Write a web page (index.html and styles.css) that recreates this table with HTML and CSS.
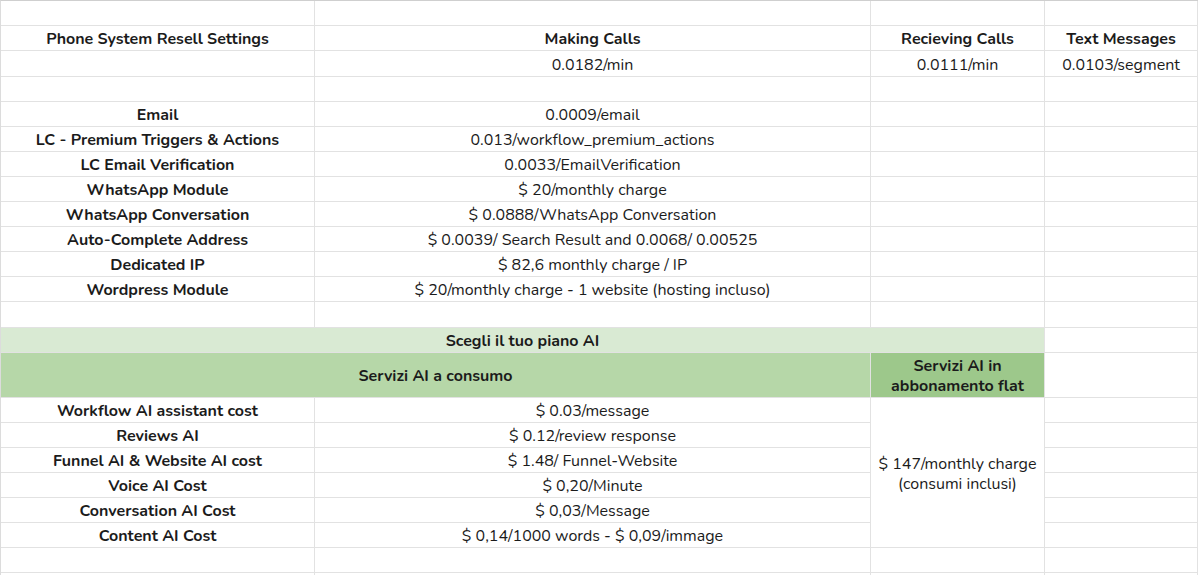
FILE: index.html
```html
<!DOCTYPE html>
<html lang="it">
<head>
<meta charset="utf-8">
<title>Phone System Resell Settings</title>
<link rel="stylesheet" href="styles.css">
</head>
<body>
<div class="sheet">
  <div class="c"></div><div class="c"></div><div class="c"></div><div class="c"></div>

  <div class="c b">Phone System Resell Settings</div>
  <div class="c b">Making Calls</div>
  <div class="c b">Recieving Calls</div>
  <div class="c b">Text Messages</div>

  <div class="c"></div>
  <div class="c">0.0182/min</div>
  <div class="c">0.0111/min</div>
  <div class="c">0.0103/segment</div>

  <div class="c"></div><div class="c"></div><div class="c"></div><div class="c"></div>

  <div class="c b">Email</div><div class="c">0.0009/email</div><div class="c"></div><div class="c"></div>
  <div class="c b">LC - Premium Triggers &amp; Actions</div><div class="c">0.013/workflow_premium_actions</div><div class="c"></div><div class="c"></div>
  <div class="c b">LC Email Verification</div><div class="c">0.0033/EmailVerification</div><div class="c"></div><div class="c"></div>
  <div class="c b">WhatsApp Module</div><div class="c">$ 20/monthly charge</div><div class="c"></div><div class="c"></div>
  <div class="c b">WhatsApp Conversation</div><div class="c">$ 0.0888/WhatsApp Conversation</div><div class="c"></div><div class="c"></div>
  <div class="c b">Auto-Complete Address</div><div class="c">$ 0.0039/ Search Result and 0.0068/ 0.00525</div><div class="c"></div><div class="c"></div>
  <div class="c b">Dedicated IP</div><div class="c">$ 82,6 monthly charge / IP</div><div class="c"></div><div class="c"></div>
  <div class="c b">Wordpress Module</div><div class="c">$ 20/monthly charge - 1 website (hosting incluso)</div><div class="c"></div><div class="c"></div>

  <div class="c"></div><div class="c"></div><div class="c"></div><div class="c"></div>

  <div class="c b span3 green-light">Scegli il tuo piano AI</div><div class="c"></div>

  <div class="c b span2 green">Servizi AI a consumo</div>
  <div class="c b green-dark">Servizi AI in<br>abbonamento flat</div>
  <div class="c"></div>

  <div class="c b">Workflow AI assistant cost</div><div class="c">$ 0.03/message</div>
  <div class="c tall">$ 147/monthly charge<br>(consumi inclusi)</div><div class="c"></div>
  <div class="c b">Reviews AI</div><div class="c">$ 0.12/review response</div><div class="c"></div>
  <div class="c b">Funnel AI &amp; Website AI cost</div><div class="c">$ 1.48/ Funnel-Website</div><div class="c"></div>
  <div class="c b">Voice AI Cost</div><div class="c">$ 0,20/Minute</div><div class="c"></div>
  <div class="c b">Conversation AI Cost</div><div class="c">$ 0,03/Message</div><div class="c"></div>
  <div class="c b">Content AI Cost</div><div class="c">$ 0,14/1000 words - $ 0,09/immage</div><div class="c"></div>

  <div class="c"></div><div class="c"></div><div class="c"></div><div class="c"></div>
  <div class="c"></div><div class="c"></div><div class="c"></div><div class="c"></div>
</div>
</body>
</html>
```

FILE: styles.css
```css
html, body {
  margin: 0;
  padding: 0;
  background: #ffffff;
}

body {
  font-family: "Nunito", "Lato", "Noto Sans", sans-serif;
  font-size: 16px;
  color: #1b1b1b;
  overflow: hidden;
}

.sheet {
  display: grid;
  grid-template-columns: 314px 556px 174px 153px;
  grid-template-rows: 25px 25px 26px repeat(9, 25px) 26px 25px 45px repeat(8, 25px);
  width: max-content;
  border-top: 1px solid #cfcfcf;
  border-left: 1px solid #dcdcdc;
}

.c {
  box-sizing: border-box;
  display: flex;
  align-items: center;
  justify-content: center;
  text-align: center;
  line-height: 20px;
  border-right: 1px solid #e2e2e2;
  border-bottom: 1px solid #e2e2e2;
  white-space: nowrap;
  padding-top: 2px;
}

.b {
  font-weight: 700;
}

.span3 {
  grid-column: span 3;
}

.span2 {
  grid-column: span 2;
}

.tall {
  grid-row: span 6;
}

.green-light {
  background: #d9ead3;
}

.green {
  background: #b6d7a8;
}

.green-dark {
  background: #9dc88b;
}
```
